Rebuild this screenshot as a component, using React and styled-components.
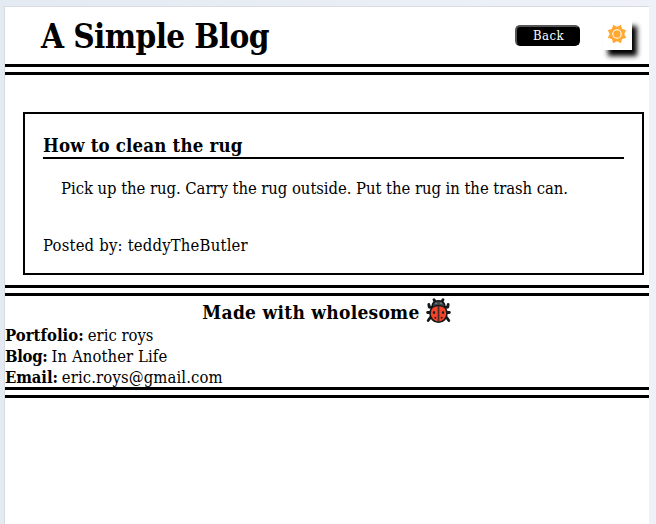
import React from "react";
import styled, { createGlobalStyle } from "styled-components";

const Global = createGlobalStyle`
  *{box-sizing:border-box}
  html,body,#root{height:100%}
  body{margin:0;background:#e6ecf4;overflow:hidden;color:#000;
    font-family:"DejaVu Serif Condensed","DejaVu Serif",serif;font-stretch:condensed;font-size:16.5px;line-height:21px}
  h1,h2,p{margin:0}
`;
const Frame = styled.div`height:100%;padding:6px 7px 0 4px;background:linear-gradient(90deg,#e4eaf2,#e9eef5 50%,#eef2f8);`;
const Page = styled.div`height:100%;background:#fff;border:solid #d8dce1;border-width:1px 0 0 1px;`;
const Text = styled.span`white-space:nowrap;letter-spacing:${p => p.$ls || 0}px;`;
const Header = styled.header`display:flex;align-items:center;height:57px;padding:0 17px 0 36px;`;
const Title = styled.h1`flex:1;padding-top:2px;font-size:33px;line-height:42px;`;
const BackButton = styled.button`width:65px;height:21px;margin-right:23px;padding:0 0 0 2px;border:2px outset #555;border-radius:5px;background:#000;color:#fff;font:inherit;font-size:13px;line-height:16px;`;
const ThemeButton = styled.button`width:29px;height:30px;margin-top:-1px;padding:0 2px 2px 0;border:0;background:#fff;box-shadow:5px 6px 5px #000;display:grid;place-items:center;`;
const Rule = styled.div`height:11px;border:solid #000;border-width:3px 0;`;
const Card = styled.article`height:163px;margin:37px 5px 10px 18px;padding:20px 18px 0;border:2px solid #000;`;
const CardTitle = styled.h2`height:25px;font-size:18.5px;line-height:23px;border-bottom:2px solid #000;`;
const Body = styled.p`padding:19px 0 0 18px;`;
const Author = styled.p`padding-top:36px;`;
const Footer = styled.footer`height:91px;`;
const Made = styled.h2`display:flex;align-items:center;justify-content:center;gap:6px;height:29px;padding:3px 1px 0 0;font-size:19px;`;
const Contact = styled.p`display:flex;gap:4px;height:21px;`;

const Sun = () => (
  <svg width="20" height="20" viewBox="-10 -10 20 20" fill="#ffa933">
    {[0, 45, 90, 135, 180, 225, 270, 315].map(a => <path key={a} d="M-3.7-5.5L0-10L3.7-5.5Z" transform={`rotate(${a + 22.5})`} />)}
    <circle r="7" /><circle r="4.2" fill="none" stroke="#fff" strokeWidth="1.1" />
  </svg>
);
const BugIcon = styled.svg`margin-top:-2px;`;
const Ladybug = () => (
  <BugIcon width="25" height="26" viewBox="0 0 25 26">
    <g fill="none" stroke="#16191b" strokeWidth="2.8" strokeLinecap="round" strokeLinejoin="round">
      <path d="M9.5 4L8 1.7M15.5 4L17 1.7M6 9.5L3.2 9L2.8 6.3M19 9.5L21.8 9L22.2 6.3M5 14.5H1.6M20 14.5H23.4M5.5 18.5L3.6 20.5L2.2 22.5M19.5 18.5L21.4 20.5L22.8 22.5" />
    </g>
    <path d="M6.2 9Q6 2.8 12.5 2.8T18.8 9Z" fill="#41484c" stroke="#111" strokeWidth="1.6" />
    <path d="M9.5 5.2H10.5M14.5 5.2H15.5" stroke="#bbc1c4" strokeWidth="1" />
    <path d="M12.5 7.5C7 7.5 4 11 4 15.5S7.5 24.3 12.5 24.3S21 20 21 15.5S18 7.5 12.5 7.5Z" fill="#f4452a" stroke="#171717" strokeWidth="1.6" />
    <path d="M12.5 8V24" stroke="#4b2a26" strokeWidth="1.7" />
    <g fill="#222"><ellipse cx="8" cy="14.5" rx="1.2" ry="1.6" /><ellipse cx="17" cy="14.5" rx="1.2" ry="1.6" /><circle cx="9.4" cy="19.8" r="1" /><circle cx="15.6" cy="19.8" r="1" /></g>
  </BugIcon>
);
const contacts = [["Portfolio:", "eric roys", 0.05, 0], ["Blog:", "In Another Life", -0.3, 0.1], ["Email:", "eric.roys@gmail.com", -0.1, 0.13]];

export default function App() {
  return (
    <><Global /><Frame><Page>
      <Header>
        <Title><Text $ls={-0.6}>A Simple Blog</Text></Title>
        <BackButton><Text $ls={0.4}>Back</Text></BackButton>
        <ThemeButton aria-label="Toggle theme"><Sun /></ThemeButton>
      </Header>
      <Rule />
      <Card>
        <CardTitle><Text $ls={0.18}>How to clean the rug</Text></CardTitle>
        <Body><Text $ls={-0.05}>Pick up the rug. Carry the rug outside. Put the rug in the trash can.</Text></Body>
        <Author><Text $ls={0.2}>Posted by: teddyTheButler</Text></Author>
      </Card>
      <Rule />
      <Footer>
        <Made><Text $ls={0.27}>Made with wholesome</Text><Ladybug /></Made>
        {contacts.map(([k, v, a, b]) => <Contact key={k}><Text as="b" $ls={a}>{k}</Text><Text $ls={b}>{v}</Text></Contact>)}
      </Footer>
      <Rule />
    </Page></Frame></>
  );
}
